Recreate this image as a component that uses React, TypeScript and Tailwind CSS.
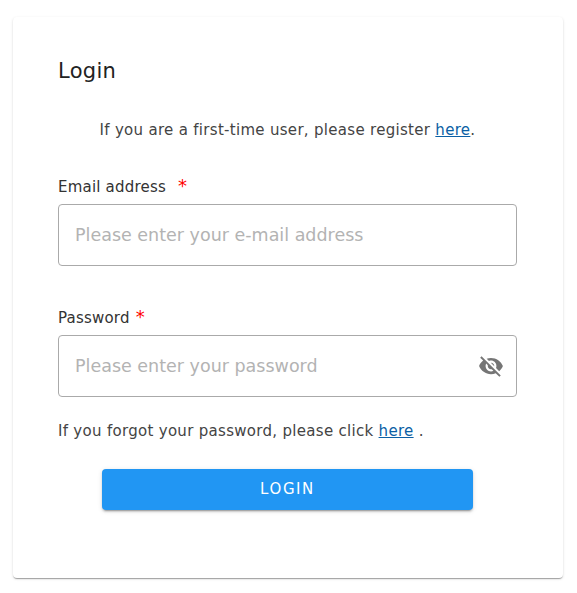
export default function App() {
  return (
    <div className="min-h-[593px] bg-white pt-[17px] pl-[13px] font-['DejaVu_Sans',sans-serif] text-[15px] tracking-[0.3px] text-[#444]">
      <div className="flex h-[561px] w-[550px] flex-col rounded-[4px] bg-white pl-[45px] pr-[46px] shadow-[0_2px_1px_-1px_rgba(0,0,0,0.2),0_1px_1px_0_rgba(0,0,0,0.14),0_1px_3px_0_rgba(0,0,0,0.12)]">
        <h1 className="mt-[40px] text-[21px] leading-[28px] tracking-[0.3px] text-[#222]">Login</h1>

        <p className="mt-[35px] text-center leading-[20px]">
          If you are a first-time user, please register{" "}
          <a href="#" className="text-[#0b5fa5] underline">here</a>.
        </p>

        <label className="mt-[36px] block h-[20px] leading-[20px] tracking-[0.2px] text-[#333]">
          Email address <span className="ml-[7px] text-[18px] leading-[20px] text-[#f00]">*</span>
        </label>
        <div className="mt-[8px] flex h-[62px] items-center rounded-[4px] border border-[#aaa] px-[16px]">
          <input
            placeholder="Please enter your e-mail address"
            className="w-full text-[17.5px] tracking-normal outline-none placeholder:text-[#b3b3b3]"
          />
        </div>

        <label className="mt-[41px] block h-[20px] leading-[20px] tracking-[0.2px] text-[#333]">
          Password <span className="ml-[1px] text-[18px] leading-[20px] text-[#f00]">*</span>
        </label>
        <div className="mt-[8px] flex h-[62px] items-center rounded-[4px] border border-[#aaa] pl-[16px] pr-[12px]">
          <input
            placeholder="Please enter your password"
            className="w-full text-[17.5px] tracking-normal outline-none placeholder:text-[#b3b3b3]"
          />
          <svg viewBox="0 0 24 24" className="h-[26px] w-[26px] shrink-0 fill-[#757575]">
            <path d="M12 7c2.76 0 5 2.24 5 5 0 .65-.13 1.26-.36 1.83l2.92 2.92c1.51-1.26 2.7-2.89 3.43-4.75-1.73-4.39-6-7.5-11-7.5-1.4 0-2.74.25-3.98.7l2.16 2.16C10.74 7.13 11.35 7 12 7zM2 4.27l2.28 2.28.46.46C3.08 8.3 1.78 10.02 1 12c1.73 4.39 6 7.5 11 7.5 1.55 0 3.03-.3 4.38-.84l.42.42L19.73 22 21 20.73 3.27 3 2 4.27zM7.53 9.8l1.55 1.55c-.05.21-.08.43-.08.65 0 1.66 1.34 3 3 3 .22 0 .44-.03.65-.08l1.55 1.55c-.67.33-1.41.53-2.2.53-2.76 0-5-2.24-5-5 0-.79.2-1.53.53-2.2zm4.31-.78l3.15 3.15.02-.16c0-1.66-1.34-3-3-3l-.17.01z" />
          </svg>
        </div>

        <p className="mt-[24px] leading-[20px]">
          If you forgot your password, please click{" "}
          <a href="#" className="text-[#0b5fa5] underline">here</a> .
        </p>

        <button className="mx-auto mt-[28px] h-[41px] w-[371px] rounded-[4px] bg-[#2196f3] text-[15px] font-medium tracking-[1.6px] text-white shadow-[0_3px_1px_-2px_rgba(0,0,0,0.2),0_2px_2px_0_rgba(0,0,0,0.14),0_1px_5px_0_rgba(0,0,0,0.12)]">
          LOGIN
        </button>
      </div>
    </div>
  )
}
